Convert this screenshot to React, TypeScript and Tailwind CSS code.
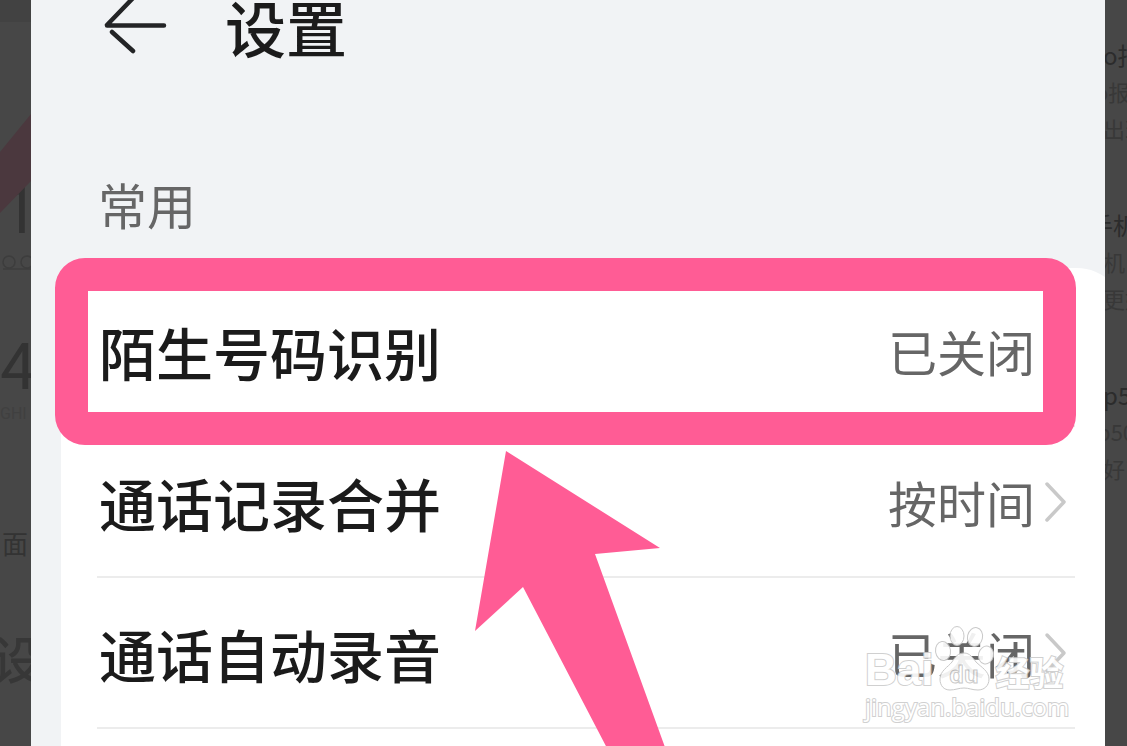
import React from 'react';

// --- TYPES ---
interface SettingItem {
  label: string;
  value: string;
  highlighted?: boolean;
}

interface PageSnippet {
  title: string;
  titleIndent: string;
  lines: string[];
  linesIndent: string;
}

// --- DATA ---
const settings: SettingItem[] = [
  { label: '陌生号码识别', value: '已关闭', highlighted: true },
  { label: '通话记录合并', value: '按时间' },
  { label: '通话自动录音', value: '已关闭' },
];

const snippets: PageSnippet[] = [
  { title: 'o报', titleIndent: '-ml-0.5', lines: ['o报', '出现'], linesIndent: 'first:-ml-2.5' },
  { title: '手机', titleIndent: '-ml-4', lines: ['机', '更好'], linesIndent: 'first:-ml-0.5' },
  { title: 'p50', titleIndent: '-ml-0.5', lines: ['p50', '好了'], linesIndent: 'first:-ml-2' },
];

// --- ICONS ---
const BackArrow = () => (
  <svg className="h-[54px] w-[72px]" viewBox="0 0 72 54" fill="none" stroke="#232426" strokeWidth="4.5" strokeLinecap="round" aria-hidden="true">
    <path d="M10 25.500H67M37 -3L10 25M15 32L36 51" />
  </svg>
);

const Chevron = () => (
  <svg className="h-11 w-6 shrink-0" viewBox="0 0 24 44" fill="none" stroke="#c9c9c9" strokeWidth="3.500" strokeLinecap="round" strokeLinejoin="round" aria-hidden="true">
    <path d="M4 4L21 22L4 40" />
  </svg>
);

const VoicemailIcon = () => (
  <svg className="h-[18px] w-10" viewBox="0 0 40 18" fill="none" stroke="#3d3d3d" strokeWidth="1.500" aria-hidden="true">
    <circle cx="9" cy="8" r="6" />
    <circle cx="27" cy="8" r="6" />
    <path d="M3 15H32" />
  </svg>
);

const PointerArrow = () => (
  <svg className="pointer-events-none absolute left-[442px] top-[450px] h-[300px] w-[194px]" viewBox="0 0 194 300" aria-hidden="true">
    <path d="M33 1L187 98L122 104L193 300H135L50 137L2 181Z" fill="#ff5c95" />
  </svg>
);

const Paw = () => (
  <svg className="h-[66px] w-[62px] [-webkit-text-stroke:0] [paint-order:normal]" viewBox="0 0 62 66" fill="#ffffff" stroke="#c4c4c4" strokeWidth="1" aria-hidden="true">
    <ellipse cx="10" cy="26" rx="7.500" ry="9.500" transform="rotate(-8 10 26)" />
    <ellipse cx="24" cy="11" rx="7" ry="9.500" />
    <ellipse cx="42" cy="12" rx="7.500" ry="9.500" transform="rotate(12 42 12)" />
    <ellipse cx="53" cy="30" rx="7.500" ry="9" transform="rotate(14 53 30)" />
    <path d="M31 28C37 28 40 33 43 37C48 42 56 46 56 54C56 61 51 65 45 65C39 65 36 63 31 63C26 63 22 65 17 65C11 65 7 61 7 54C7 46 15 42 19 37C22 32 25 28 31 28Z" />
    <text x="31" y="58" textAnchor="middle" fontSize="24" fontWeight="700" fontFamily="Liberation Sans, sans-serif">du</text>
  </svg>
);

// Dimmed dialer page, left of the opened picture
const LeftBackdrop = () => (
  <div className="relative flex w-[31px] shrink-0 flex-col items-start overflow-hidden text-[#333333]">
    <div className="h-[22px] w-full shrink-0 bg-[#424242]" />
    <span className="mt-[160px] pl-0.5 font-['Roboto'] text-[64px] leading-[60px]">1</span>
    <span className="mt-3"><VoicemailIcon /></span>
    <span className="mt-[66px] font-['Roboto'] text-[64px] leading-[60px]">4</span>
    <span className="mt-1 font-['Roboto'] text-[16px] leading-6 text-[#404040]">GHI</span>
    <span className="mt-[92px] pl-0.5 text-[26px] leading-[50px]">面</span>
    <span className="-ml-2 mt-[54px] text-[50px] font-medium leading-[70px] text-[#373737]">设</span>
    <svg className="absolute left-0 top-[114px] h-[102px] w-[31px]" viewBox="0 0 31 102" aria-hidden="true">
      <path d="M0 38L31 0V67L0 99Z" fill="#4b383e" />
    </svg>
  </div>
);

// Dimmed article list, right of the opened picture
const RightBackdrop = () => (
  <div className="flex w-[22px] shrink-0 flex-col overflow-hidden pt-9 whitespace-nowrap">
    {snippets.map((snippet) => (
      <div key={snippet.title} className="h-[170px] shrink-0">
        <p className={`text-[24px] leading-[37px] text-[#2c2c2c] ${snippet.titleIndent}`}>{snippet.title}</p>
        <div>
          {snippet.lines.map((line) => (
            <p key={line} className={`-ml-0.5 text-[22px] leading-[37px] text-[#383838] ${snippet.linesIndent}`}>{line}</p>
          ))}
        </div>
      </div>
    ))}
  </div>
);

const SettingRow: React.FC<{ item: SettingItem }> = ({ item }) => (
  <li className="relative border-b-2 border-[#ececec]">
    <button type="button" className="flex h-[149px] w-full items-center pl-0.5 text-left">
      <span className="flex-1 pt-0.5 text-[57px] font-medium text-[#1b1b1b]">{item.label}</span>
      <span className="mr-2 text-[49px] text-[#666666]">{item.value}</span>
      <span className="mr-2 flex"><Chevron /></span>
    </button>
    {item.highlighted && (
      <div className="pointer-events-none absolute -bottom-5 -left-[42px] -right-px -top-[18px] rounded-[30px] border-[33px] border-[#ff5c95]" />
    )}
  </li>
);

const Watermark = () => (
  <div className="pointer-events-none absolute right-[38px] top-[625px] w-[202px] font-['Liberation_Sans','Noto_Sans_CJK_SC',sans-serif] text-white opacity-90 [-webkit-text-stroke:2px_#cccccc] [paint-order:stroke]">
    <div className="flex items-end">
      <span className="text-[44px] font-bold leading-[42px]">Bai</span>
      <Paw />
      <span className="text-[34px] font-bold leading-[34px]">经验</span>
    </div>
    <p className="font-['Open_Sans'] text-[24px] leading-8">jingyan.baidu.com</p>
  </div>
);

const App: React.FC = () => {
  return (
    <div className="flex h-screen overflow-hidden bg-[#474747] font-['Noto_Sans_CJK_SC',sans-serif]">
      <LeftBackdrop />

      <main className="relative min-w-0 flex-1 overflow-hidden bg-[#f1f3f5]">
        <header className="flex h-[54px] items-center gap-14 pl-[66px]">
          <button type="button" aria-label="返回"><BackArrow /></button>
          <h1 className="text-[61px] font-medium leading-[54px] text-[#1b1b1b]">设置</h1>
        </header>

        <section>
          <h2 className="mt-[114px] pl-[67px] text-[49px] leading-[72px] text-[#666666]">常用</h2>
          <ul className="-mr-5 ml-[30px] mt-7 rounded-[48px] bg-white pb-20 pl-9 pr-[50px] pt-2">
            {settings.map((item) => (
              <SettingRow key={item.label} item={item} />
            ))}
          </ul>
        </section>

        <PointerArrow />
        <Watermark />
      </main>

      <RightBackdrop />
    </div>
  );
};

export default App;
